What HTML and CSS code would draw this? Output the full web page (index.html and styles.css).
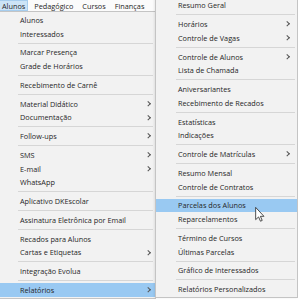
FILE: index.html
```html
<!DOCTYPE html>
<html>
<head>
    <link rel="stylesheet" href="styles.css">
</head>
<body>
    <div class="screen">
        <div class="menubar">
            <span class="bar-item active">Alunos</span>
            <span class="bar-item">Pedagógico</span>
            <span class="bar-item">Cursos</span>
            <span class="bar-item">Finanças</span>
        </div>

        <!-- Alunos dropdown -->
        <div class="menu main-menu">
            <div class="item">Alunos</div>
            <div class="item">Interessados</div>
            <div class="sep"></div>
            <div class="item">Marcar Presença</div>
            <div class="item">Grade de Horários</div>
            <div class="sep"></div>
            <div class="item">Recebimento de Carnê</div>
            <div class="sep"></div>
            <div class="item sub">Material Didático</div>
            <div class="item sub">Documentação</div>
            <div class="sep"></div>
            <div class="item sub">Follow-ups</div>
            <div class="sep"></div>
            <div class="item sub">SMS</div>
            <div class="item sub">E-mail</div>
            <div class="item">WhatsApp</div>
            <div class="sep"></div>
            <div class="item">Aplicativo DKEscolar</div>
            <div class="sep"></div>
            <div class="item">Assinatura Eletrônica por Email</div>
            <div class="sep"></div>
            <div class="item">Recados para Alunos</div>
            <div class="item sub">Cartas e Etiquetas</div>
            <div class="sep"></div>
            <div class="item">Integração Evolua</div>
            <div class="sep"></div>
            <div class="item sub hover">Relatórios</div>
        </div>

        <!-- Relatórios submenu -->
        <div class="menu sub-menu">
            <div class="item">Resumo Geral</div>
            <div class="sep"></div>
            <div class="item sub">Horários</div>
            <div class="item sub">Controle de Vagas</div>
            <div class="sep"></div>
            <div class="item sub">Controle de Alunos</div>
            <div class="item">Lista de Chamada</div>
            <div class="sep"></div>
            <div class="item">Aniversariantes</div>
            <div class="item">Recebimento de Recados</div>
            <div class="sep"></div>
            <div class="item">Estatísticas</div>
            <div class="item">Indicações</div>
            <div class="sep"></div>
            <div class="item sub">Controle de Matrículas</div>
            <div class="sep"></div>
            <div class="item">Resumo Mensal</div>
            <div class="item">Controle de Contratos</div>
            <div class="sep"></div>
            <div class="item hover">Parcelas dos Alunos</div>
            <div class="item">Reparcelamentos</div>
            <div class="sep"></div>
            <div class="item">Término de Cursos</div>
            <div class="item">Últimas Parcelas</div>
            <div class="sep"></div>
            <div class="item">Gráfico de Interessados</div>
            <div class="sep"></div>
            <div class="item">Relatórios Personalizados</div>
        </div>

        <svg class="cursor" width="10" height="15" viewBox="0 0 12 19">
            <path d="M0.5 0.5 L0.5 16 L4.2 12.6 L6.6 18 L8.8 17 L6.5 11.8 L11 11.8 Z" fill="#fff" stroke="#222" stroke-width="1" stroke-linejoin="round"/>
        </svg>
    </div>
</body>
</html>
```

FILE: styles.css
```css
body {
    margin: 0;
    background: #fff;
    font-family: "Open Sans", "Noto Sans", sans-serif;
    font-size: 7.3px;
    color: #262626;
}

.screen {
    position: relative;
    width: 298px;
    height: 300px;
    overflow: hidden;
}

.menubar {
    display: flex;
    height: 11px;
    background: #fbfbfb;
    margin-left: -1px;
}

.bar-item {
    display: flex;
    align-items: center;
    padding: 0 2px;
    margin-right: 3px;
    border: 1px solid transparent;
}

.bar-item.active {
    background: #cce4f7;
    border-color: #a6cdee;
}

.menu {
    background: #f2f2f2;
    border: 1px solid #c4c4c4;
    padding: 1px 0;
}

.main-menu {
    width: 158px;
    margin-left: -4px;
}

.sub-menu {
    position: absolute;
    left: 155px;
    bottom: 2px;
    width: 141px;
    box-shadow: -1px 0 2px rgba(0, 0, 0, 0.08);
}

.item {
    display: flex;
    align-items: center;
    height: 13.75px;
    padding: 0 6px 0 23px;
    white-space: nowrap;
}

.sub-menu .item {
    padding: 0 9px 0 22px;
}

.item.sub::after {
    content: "";
    margin-left: auto;
    width: 2.5px;
    height: 2.5px;
    border-right: 1px solid #555;
    border-bottom: 1px solid #555;
    transform: rotate(-45deg);
}

.item.hover {
    background: #99c9f2;
}

.sep {
    height: 5px;
    display: flex;
    align-items: center;
    margin: 0 2px 0 21px;
}

.sub-menu .sep {
    margin-left: 20px;
}

.sep::before {
    content: "";
    flex: 1;
    height: 1px;
    background: #d6d6d6;
}

.cursor {
    position: absolute;
    left: 255px;
    top: 207px;
}
```
